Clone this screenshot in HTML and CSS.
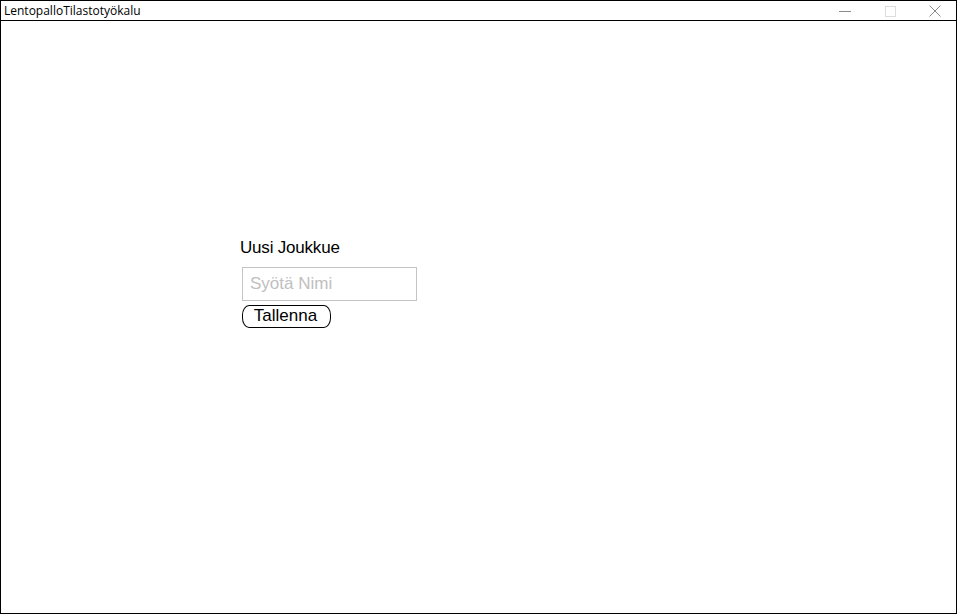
FILE: index.html
```html
<!DOCTYPE html>
<html lang="fi">
<head>
<meta charset="utf-8">
<title>LentopalloTilastotyökalu</title>
<link rel="stylesheet" href="styles.css">
</head>
<body>
<div class="window">
  <div class="titlebar">
    <span class="title">LentopalloTilastotyökalu</span>
    <div class="controls">
      <span class="ctl ctl-min"><svg width="14" height="14" viewBox="0 0 14 14"><line x1="1" y1="7.5" x2="13" y2="7.5" stroke="#8a8a8a" stroke-width="1"/></svg></span>
      <span class="ctl ctl-max"><svg width="14" height="14" viewBox="0 0 14 14"><rect x="2.5" y="2.5" width="10" height="10" fill="none" stroke="#dcdcdc" stroke-width="1"/></svg></span>
      <span class="ctl ctl-close"><svg width="14" height="14" viewBox="0 0 14 14"><path d="M1.5 1.5 L12.5 12.5 M12.5 1.5 L1.5 12.5" stroke="#8a8a8a" stroke-width="1"/></svg></span>
    </div>
  </div>
  <div class="content">
    <div class="form">
      <div class="heading">Uusi Joukkue</div>
      <input class="name-input" type="text" placeholder="Syötä Nimi">
      <button class="save-btn" type="button">Tallenna</button>
    </div>
  </div>
</div>
</body>
</html>
```
FILE: styles.css
```css
html, body {
  margin: 0;
  padding: 0;
  background: #ffffff;
}
.window {
  box-sizing: border-box;
  width: 957px;
  height: 614px;
  border: 1px solid #000000;
  display: flex;
  flex-direction: column;
  background: #ffffff;
}
.titlebar {
  height: 19px;
  border-bottom: 1px solid #000000;
  display: flex;
  align-items: center;
  justify-content: space-between;
}
.title {
  font-family: "Open Sans", "DejaVu Sans", sans-serif;
  font-size: 12px;
  color: #000000;
  padding-left: 3px;
  line-height: 19px;
}
.controls {
  display: flex;
  align-items: center;
  height: 19px;
  padding-right: 14px;
  gap: 31px;
}
.ctl {
  display: flex;
  width: 14px;
  height: 14px;
}
.content {
  flex: 1;
  padding: 217px 0 0 239px;
}
.form {
  display: flex;
  flex-direction: column;
  align-items: flex-start;
}
.heading {
  font-family: "Liberation Sans", Arial, sans-serif;
  font-size: 17px;
  line-height: 20px;
  color: #000000;
  margin-bottom: 9px;
  letter-spacing: -0.2px;
}
.name-input {
  box-sizing: border-box;
  width: 175px;
  height: 34px;
  margin: 0 0 4px 2px;
  border: 1px solid #c4c4c4;
  padding: 0 7px;
  font-family: "Liberation Sans", Arial, sans-serif;
  font-size: 17px;
  outline: none;
  background: #ffffff;
}
.name-input::placeholder {
  color: #c0c0c0;
}
.save-btn {
  box-sizing: border-box;
  margin-left: 2px;
  width: 89px;
  height: 23px;
  border: 1px solid #000000;
  border-radius: 7px / 10px;
  background: #ffffff;
  font-family: "Liberation Sans", Arial, sans-serif;
  font-size: 17px;
  color: #000000;
  padding: 0 2px 1px 0;
  line-height: 20px;
}
```
